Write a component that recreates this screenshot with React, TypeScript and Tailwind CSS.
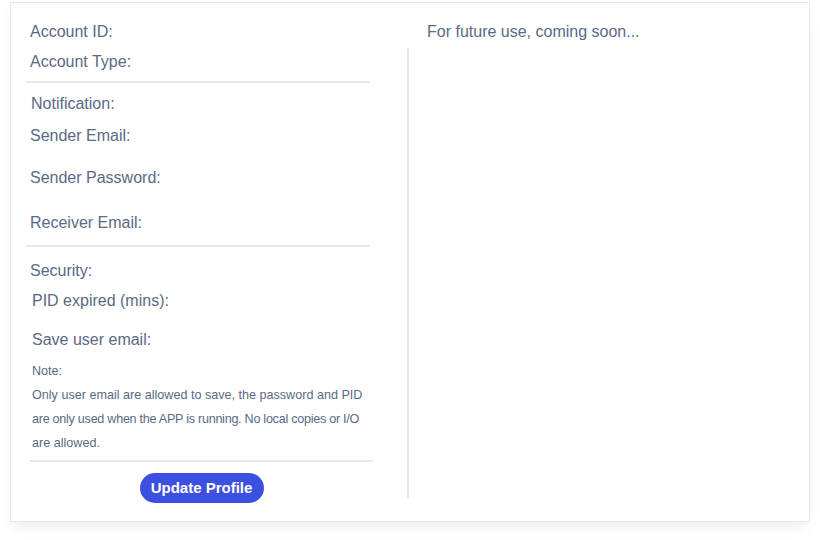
export default function App() {
  return (
    <div className="pt-[2px] pl-[10px] bg-white min-h-[540px] font-['Liberation_Sans',Arial,sans-serif] text-[#5a6985]">
      <div className="w-[800px] h-[520px] border border-[#e2e8f0] bg-white shadow-[0_8px_13px_-3px_rgba(0,0,0,0.07)] flex">
        {/* left: profile form */}
        <div className="w-[396px] pl-[15px] pt-[19px] flex flex-col text-base leading-5">
          <div className="pl-[4px]">Account ID:</div>
          <div className="pl-[4px] mt-[10px]">Account Type:</div>
          <div className="mt-[9px] w-[344px] h-[2px] bg-[#e2e8f0]" />
          <div className="pl-[5px] mt-[11px]">Notification:</div>
          <div className="pl-[4px] mt-[12px]">Sender Email:</div>
          <div className="pl-[4px] mt-[22px]">Sender Password:</div>
          <div className="pl-[4px] mt-[25px]">Receiver Email:</div>
          <div className="mt-[12px] w-[344px] h-[2px] bg-[#e2e8f0]" />
          <div className="pl-[4px] mt-[14px]">Security:</div>
          <div className="pl-[6px] mt-[10px]">PID expired (mins):</div>
          <div className="pl-[6px] mt-[19px]">Save user email:</div>
          <div className="pl-[6px] mt-[9px] text-[12.6px] leading-6 whitespace-nowrap">
            <p>Note:</p>
            <p>Only user email are allowed to save, the password and PID</p>
            <p className="tracking-[-0.27px]">are only used when the APP is running. No local copies or I/O</p>
            <p>are allowed.</p>
          </div>
          <div className="ml-[4px] mt-[5px] w-[343px] h-[2px] bg-[#e2e8f0]" />
          <div className="ml-[4px] w-[343px] mt-[11px] flex justify-center">
            <button className="w-[124px] h-[30px] rounded-full bg-[#3c50e0] text-white text-[15px] font-bold">
              Update Profile
            </button>
          </div>
        </div>

        {/* right: placeholder */}
        <div className="flex-1 pt-[19px] flex flex-col">
          <div className="ml-[20px] text-base leading-5">For future use, coming soon...</div>
          <div className="mt-[6px] h-[450px] border-l-2 border-[#e2e8f0]" />
        </div>
      </div>
    </div>
  )
}
